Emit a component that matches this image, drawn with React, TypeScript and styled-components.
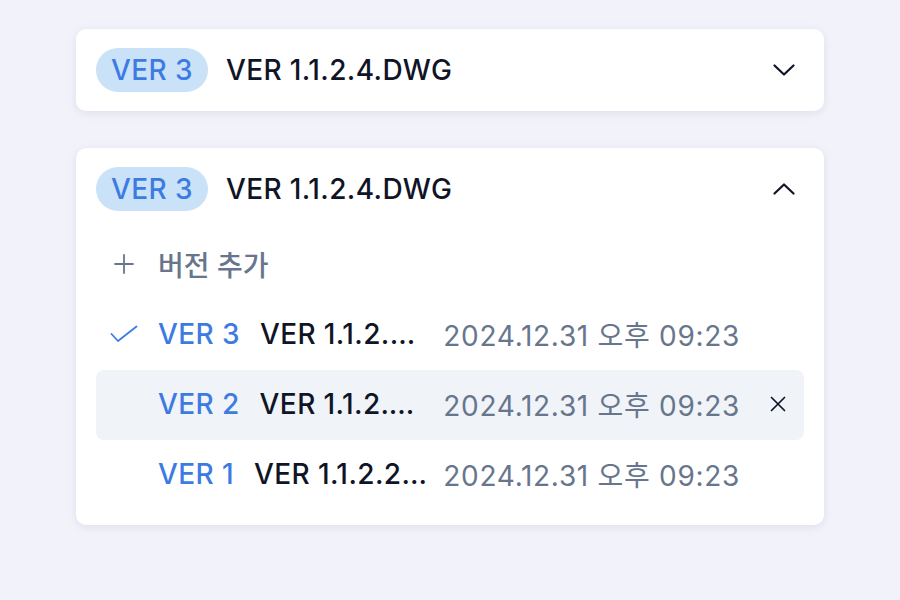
import React from "react";
import styled, { createGlobalStyle } from "styled-components";

const colors = {
  page: "#f2f3fa",
  card: "#ffffff",
  ink: "#0f1526",
  blue: "#3d7be3",
  badge: "#cae2f8",
  slate: "#67768c",
  hover: "#f0f3f8",
};

const GlobalStyle = createGlobalStyle`
  html, body {
    margin: 0;
    padding: 0;
    background: ${colors.page};
  }
  body {
    font-family: Inter, "Noto Sans CJK KR", "Noto Sans", sans-serif;
    color: ${colors.ink};
  }
`;

const Page = styled.div`
  width: 900px;
  height: 600px;
  padding-top: 29px;
  box-sizing: border-box;
  display: flex;
  flex-direction: column;
  align-items: center;
  gap: 37px;
`;

const Card = styled.div`
  width: 748px;
  box-sizing: border-box;
  background: ${colors.card};
  border-radius: 10px;
  box-shadow: 0 2px 10px rgba(120, 130, 170, 0.18);
  padding: 0 20px;

  &.open {
    padding-bottom: 15px;
  }
`;

const Header = styled.div`
  height: 82px;
  display: flex;
  align-items: center;
  gap: 18px;
`;

const Badge = styled.span`
  height: 44px;
  padding: 0 15px;
  border-radius: 22px;
  background: ${colors.badge};
  color: ${colors.blue};
  font-size: 28px;
  font-weight: 500;
  letter-spacing: 0.4px;
  display: inline-flex;
  align-items: center;
`;

const Title = styled.span`
  flex: 1;
  font-size: 28px;
  font-weight: 500;
  letter-spacing: 0.4px;
  color: ${colors.ink};
`;

const Toggle = styled.span`
  width: 24px;
  height: 24px;
  margin-right: 8px;
  display: flex;
  align-items: center;
  justify-content: center;
`;

const Row = styled.div<{ $active?: boolean }>`
  height: 70px;
  padding: 0 14px 3px;
  box-sizing: border-box;
  border-radius: 8px;
  display: flex;
  align-items: center;
  background: ${(p) => (p.$active ? colors.hover : "transparent")};
`;

const IconSlot = styled.span`
  width: 28px;
  margin-right: 20px;
  display: flex;
  align-items: center;
  justify-content: center;
`;

const AddLabel = styled.span`
  font-size: 28px;
  font-weight: 500;
  color: ${colors.slate};
`;

const VerLabel = styled.span`
  font-size: 28px;
  font-weight: 500;
  letter-spacing: 0.4px;
  color: ${colors.blue};
  margin-right: 20px;
  white-space: nowrap;
`;

const FileName = styled.span`
  flex: 1;
  min-width: 0;
  font-size: 28px;
  font-weight: 500;
  letter-spacing: 0.4px;
  color: ${colors.ink};
  white-space: nowrap;
  overflow: hidden;
  text-overflow: ellipsis;
  margin-right: 12px;
`;

const DateText = styled.span`
  font-size: 28px;
  color: ${colors.slate};
  white-space: nowrap;
  letter-spacing: 0.7px;
`;

const CloseSlot = styled.span`
  width: 24px;
  margin-left: 26px;
  display: flex;
  align-items: center;
  justify-content: center;
`;

const Chevron = ({ up }: { up?: boolean }) => (
  <svg width="22" height="12" viewBox="0 0 22 12" fill="none">
    <polyline
      points={up ? "1.5,10.5 11,1.5 20.5,10.5" : "1.5,1.5 11,10.5 20.5,1.5"}
      stroke={colors.ink}
      strokeWidth="2.2"
      strokeLinecap="round"
      strokeLinejoin="round"
    />
  </svg>
);

const Check = () => (
  <svg width="28" height="18" viewBox="0 0 28 18" fill="none">
    <polyline
      points="1.5,9 8,16 26.5,1.5"
      stroke={colors.blue}
      strokeWidth="1.8"
      strokeLinecap="round"
      strokeLinejoin="round"
    />
  </svg>
);

const Plus = () => (
  <svg width="20" height="20" viewBox="0 0 20 20" fill="none">
    <path d="M10 1v18M1 10h18" stroke={colors.slate} strokeWidth="1.8" strokeLinecap="round" />
  </svg>
);

const Close = () => (
  <svg width="16" height="16" viewBox="0 0 16 16" fill="none">
    <path d="M1.5 1.5l13 13M14.5 1.5l-13 13" stroke={colors.ink} strokeWidth="1.7" strokeLinecap="round" />
  </svg>
);

interface Version {
  ver: string;
  file: string;
  date: string;
  current?: boolean;
  active?: boolean;
}

const versions: Version[] = [
  { ver: "VER 3", file: "VER 1.1.2.4.DWG", date: "2024.12.31 오후 09:23", current: true },
  { ver: "VER 2", file: "VER 1.1.2.3.DWG", date: "2024.12.31 오후 09:23", active: true },
  { ver: "VER 1", file: "VER 1.1.2.2.DWG", date: "2024.12.31 오후 09:23" },
];

const App: React.FC = () => (
  <>
    <GlobalStyle />
    <Page>
      <Card>
        <Header>
          <Badge>VER 3</Badge>
          <Title>VER 1.1.2.4.DWG</Title>
          <Toggle>
            <Chevron />
          </Toggle>
        </Header>
      </Card>

      <Card className="open">
        <Header>
          <Badge>VER 3</Badge>
          <Title>VER 1.1.2.4.DWG</Title>
          <Toggle>
            <Chevron up />
          </Toggle>
        </Header>
        <Row>
          <IconSlot>
            <Plus />
          </IconSlot>
          <AddLabel>버전 추가</AddLabel>
        </Row>
        {versions.map((v) => (
          <Row key={v.ver} $active={v.active}>
            <IconSlot>{v.current && <Check />}</IconSlot>
            <VerLabel>{v.ver}</VerLabel>
            <FileName>{v.file}</FileName>
            <DateText>{v.date}</DateText>
            <CloseSlot>{v.active && <Close />}</CloseSlot>
          </Row>
        ))}
      </Card>
    </Page>
  </>
);

export default App;
